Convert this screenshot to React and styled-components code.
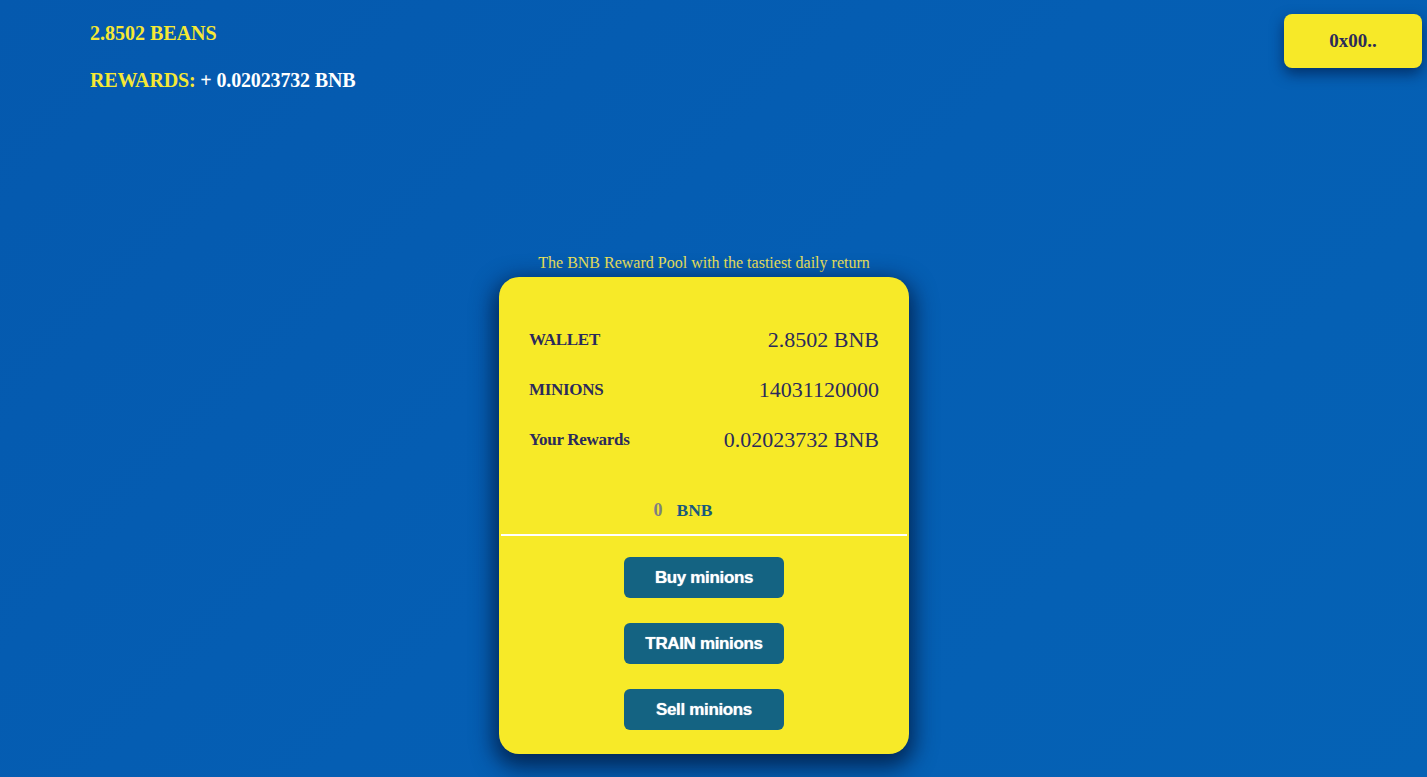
import React from 'react';
import styled, { createGlobalStyle } from 'styled-components';

const GlobalStyle = createGlobalStyle`
  html, body {
    margin: 0;
    padding: 0;
    height: 100%;
  }
  body {
    font-family: 'Liberation Serif', 'Times New Roman', serif;
    background: linear-gradient(135deg, #0559ae 0%, #055eb3 50%, #0562b5 100%);
    min-height: 777px;
    overflow: hidden;
  }
`;

const Page = styled.div`
  min-height: 777px;
`;

const Header = styled.header`
  display: flex;
  justify-content: space-between;
  align-items: flex-start;
  padding: 14px 5px 0 90px;
`;

const Stats = styled.div`
  display: flex;
  flex-direction: column;
  gap: 23px;
  padding-top: 7px;
`;

const StatLine = styled.div`
  font-size: 20px;
  line-height: 24px;
  font-weight: bold;
  color: ${(p) => (p.$light ? '#ffffff' : '#f5e834')};
  letter-spacing: ${(p) => (p.$light ? '-0.15px' : '0')};
`;

const Accent = styled.span`
  color: #f5e834;
`;

const WalletButton = styled.button`
  width: 138px;
  height: 54px;
  border: none;
  border-radius: 8px;
  background: #f7e928;
  color: #2b2a5a;
  font-family: 'Liberation Serif', 'Times New Roman', serif;
  font-size: 19px;
  font-weight: bold;
  box-shadow: 0 6px 14px rgba(0, 20, 60, 0.6);
  cursor: pointer;
`;

const Main = styled.main`
  display: flex;
  flex-direction: column;
  align-items: center;
  padding: 162px 19px 0 0;
`;

const Tagline = styled.p`
  margin: 0 0 5px;
  font-size: 16px;
  line-height: 18px;
  color: #ece25a;
`;

const Card = styled.section`
  width: 410px;
  background: #f7ea28;
  border-radius: 20px;
  box-shadow: 0 8px 22px 5px rgba(0, 16, 48, 0.72);
  padding: 38px 0 24px;
  color: #2b2a5c;
`;

const Rows = styled.div`
  padding: 0 30px;
`;

const Row = styled.div`
  display: flex;
  justify-content: space-between;
  align-items: center;
  height: 50px;
`;

const Label = styled.span`
  font-size: 17px;
  font-weight: bold;
  letter-spacing: -0.3px;
`;

const Value = styled.span`
  font-size: 22px;
`;

const AmountRow = styled.div`
  display: flex;
  justify-content: center;
  align-items: center;
  gap: 14px;
  height: 40px;
  margin-top: 25px;
  padding-right: 42px;
`;

const AmountInput = styled.span`
  font-size: 18px;
  font-weight: bold;
  color: #7f8080;
`;

const Currency = styled.span`
  font-size: 17.5px;
  font-weight: bold;
  color: #1a5a7c;
`;

const Divider = styled.hr`
  margin: 4px 2px 0;
  border: none;
  height: 2px;
  background: #ffffff;
`;

const Actions = styled.div`
  display: flex;
  flex-direction: column;
  align-items: center;
  gap: 25px;
  padding-top: 21px;
`;

const ActionButton = styled.button`
  width: 160px;
  height: 41px;
  border: none;
  border-radius: 6px;
  background: #146382;
  color: #ffffff;
  font-family: 'Liberation Sans', Arial, sans-serif;
  font-size: 17px;
  font-weight: bold;
  letter-spacing: -0.35px;
  text-shadow: 0 0 1px rgba(255, 255, 255, 0.8);
  cursor: pointer;
`;

const stats = [
  { label: 'WALLET', value: '2.8502 BNB' },
  { label: 'MINIONS', value: '14031120000' },
  { label: 'Your Rewards', value: '0.02023732 BNB' },
];

export default function App() {
  return (
    <Page>
      <GlobalStyle />
      <Header>
        <Stats>
          <StatLine>2.8502 BEANS</StatLine>
          <StatLine $light>
            <Accent>REWARDS:</Accent> + 0.02023732 BNB
          </StatLine>
        </Stats>
        <WalletButton>0x00..</WalletButton>
      </Header>
      <Main>
        <Tagline>The BNB Reward Pool with the tastiest daily return</Tagline>
        <Card>
          <Rows>
            {stats.map((s) => (
              <Row key={s.label}>
                <Label>{s.label}</Label>
                <Value>{s.value}</Value>
              </Row>
            ))}
          </Rows>
          <AmountRow>
            <AmountInput>0</AmountInput>
            <Currency>BNB</Currency>
          </AmountRow>
          <Divider />
          <Actions>
            <ActionButton>Buy minions</ActionButton>
            <ActionButton>TRAIN minions</ActionButton>
            <ActionButton>Sell minions</ActionButton>
          </Actions>
        </Card>
      </Main>
    </Page>
  );
}
